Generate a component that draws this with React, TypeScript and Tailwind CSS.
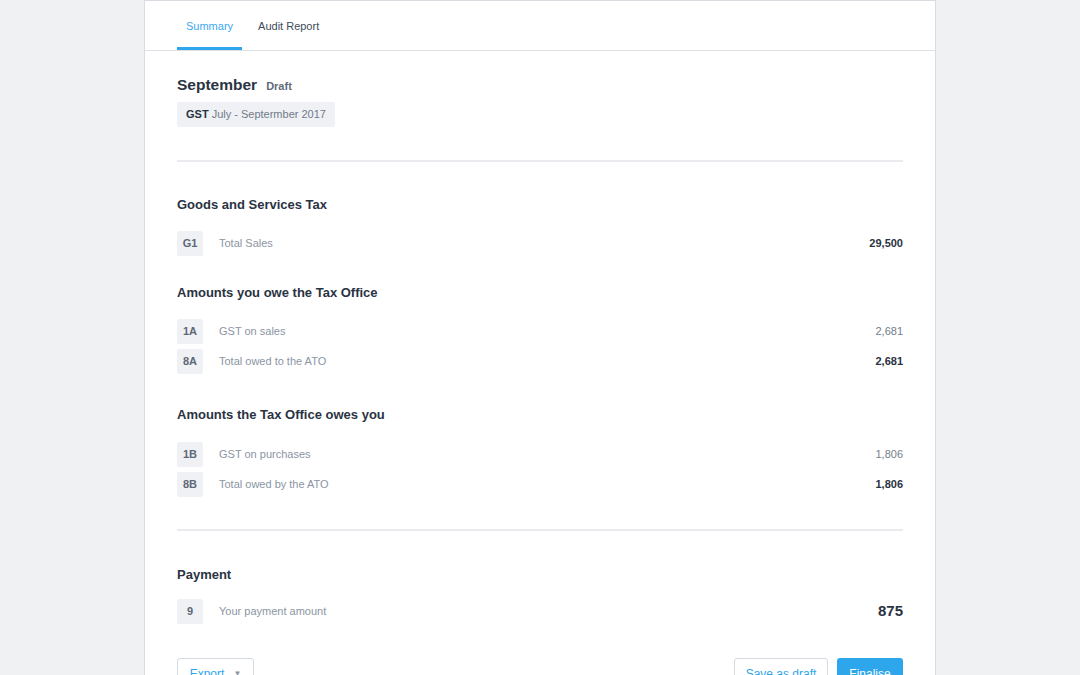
import React from "react";

const font = { fontFamily: '"Liberation Sans", Arial, sans-serif' };

function Row({ code, label, value, strong, big }: { code: string; label: string; value: string; strong?: boolean; big?: boolean }) {
  return (
    <div className="flex h-[25px] items-center">
      <div className="flex h-[25px] w-[26px] items-center justify-center rounded-[2px] bg-[#eff1f4] text-[11px] font-bold text-[#5d6878]">
        {code}
      </div>
      <div className="ml-[16px] text-[11px] text-[#8b95a3]">{label}</div>
      <div
        className={
          big
            ? "ml-auto text-[15px] font-bold text-[#2a3342]"
            : strong
            ? "ml-auto text-[11px] font-bold text-[#2a3342]"
            : "ml-auto text-[11px] text-[#727d8b]"
        }
      >
        {value}
      </div>
    </div>
  );
}

function Heading({ children, className }: { children: React.ReactNode; className: string }) {
  return <div className={"h-[18px] text-[13px] leading-[18px] font-bold text-[#2a3342] " + className}>{children}</div>;
}

export default function App() {
  return (
    <div className="min-h-screen bg-[#f0f1f3]" style={font}>
      <div className="mx-auto min-h-[675px] w-[792px] border border-[#d9dde2] bg-white">
        <div className="flex h-[50px] border-b border-[#dde1e6] pl-[32px]">
          <div className="flex h-full items-center border-b-[3px] border-[#2ea6ec] px-[9px] pt-[5px] text-[11px] text-[#3aa8f0]">
            Summary
          </div>
          <div className="flex h-full items-center border-b-[3px] border-transparent pl-[16px] pr-[8px] pt-[5px] text-[11px] text-[#404b5a]">
            Audit Report
          </div>
        </div>
        <div className="px-[32px] pt-[24px]">
          <div className="flex h-[20px] items-baseline">
            <span className="text-[15.5px] leading-[20px] font-bold text-[#2a3342]">September</span>
            <span className="ml-[9px] text-[11px] font-bold text-[#5f6b7a]">Draft</span>
          </div>
          <div className="mt-[7px] inline-flex h-[25px] items-center rounded-[2px] bg-[#eff1f4] px-[9px] text-[11px] text-[#6f7a89]">
            <span className="font-bold text-[#2a3342]">GST</span>
            <span className="ml-[3px]">July - Septermber 2017</span>
          </div>
          <div className="mt-[33px] h-[2px] bg-[#e9ebee]" />

          <Heading className="mt-[34px]">Goods and Services Tax</Heading>
          <div className="mt-[17px]">
            <Row code="G1" label="Total Sales" value="29,500" strong />
          </div>

          <Heading className="mt-[28px]">Amounts you owe the Tax Office</Heading>
          <div className="mt-[17px] flex flex-col gap-[5px]">
            <Row code="1A" label="GST on sales" value="2,681" />
            <Row code="8A" label="Total owed to the ATO" value="2,681" strong />
          </div>

          <Heading className="mt-[32px]">Amounts the Tax Office owes you</Heading>
          <div className="mt-[18px] flex flex-col gap-[5px]">
            <Row code="1B" label="GST on purchases" value="1,806" />
            <Row code="8B" label="Total owed by the ATO" value="1,806" strong />
          </div>

          <div className="mt-[32px] h-[2px] bg-[#e9ebee]" />

          <Heading className="mt-[35px]">Payment</Heading>
          <div className="mt-[15px]">
            <Row code="9" label="Your payment amount" value="875" big />
          </div>

          <div className="mt-[34px] flex items-start">
            <button className="flex h-[32px] w-[77px] items-center justify-center gap-[9px] rounded-[3px] border border-[#d5dae0] bg-white text-[12px] text-[#2ea6ec]">
              <span>Export</span>
              <span className="text-[8px] text-[#8b95a3]">▼</span>
            </button>
            <button className="ml-auto flex h-[32px] w-[94px] items-center justify-center rounded-[3px] border border-[#d5dae0] bg-white text-[12px] text-[#2ea6ec]">
              Save as draft
            </button>
            <button className="ml-[9px] flex h-[32px] w-[66px] items-center justify-center rounded-[3px] bg-[#2ea6ec] text-[12px] text-white">
              Finalise
            </button>
          </div>
          <div className="h-[20px]" />
        </div>
      </div>
    </div>
  );
}
